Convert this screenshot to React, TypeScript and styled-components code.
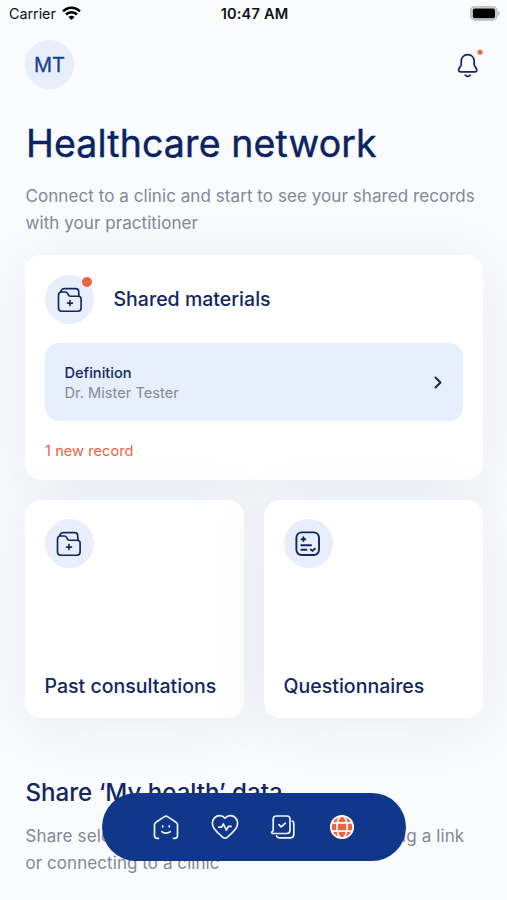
import React from "react";
import styled, { createGlobalStyle } from "styled-components";

const navy = "#122761";
const grey = "#83879a";
const orange = "#ed6442";

const GlobalStyle = createGlobalStyle`
  * { box-sizing: border-box; }
  body { margin: 0; background: #fafbfd; overflow: hidden; }
  h1, h2, h3, p { margin: 0; font-weight: 400; }
  button { border: 0; padding: 0; margin: 0; background: none; font: inherit; color: inherit; text-align: left; }
`;

const Screen = styled.main`
  position: relative;
  width: 507px;
  height: 900px;
  overflow: hidden;
  background: #fafbfd;
  color: ${navy};
  font-family: Inter, "Liberation Sans", sans-serif;
`;

const StatusBar = styled.div`
  display: grid;
  grid-template-columns: 1fr auto 1fr;
  align-items: center;
  height: 27px;
  padding: 0 7px 0 9px;
  font-size: 14.4px;
  color: #111;
`;

const Carrier = styled.div`
  display: flex;
  align-items: center;
  gap: 6px;
  letter-spacing: -0.05px;
`;

const Clock = styled.div`
  font-weight: 600;
  font-size: 14.6px;
  letter-spacing: 0.15px;
`;

const BatteryIcon = styled.svg`
  justify-self: end;
`;

const Header = styled.header`
  display: flex;
  align-items: center;
  justify-content: space-between;
  height: 49px;
  margin: 13px 24px 0 25px;
`;

const Avatar = styled.div`
  display: grid;
  place-items: center;
  width: 49px;
  height: 49px;
  border-radius: 50%;
  background: #e8eefc;
  color: #17408f;
  font-size: 20px;
  font-weight: 400;
  -webkit-text-stroke: 0.3px #17408f;
`;

const Content = styled.div`
  display: flex;
  flex-direction: column;
  padding: 0 24px 0 25px;
`;

const Title = styled.h1`
  margin: 32px 0 0 1px;
  font-size: 37.5px;
  line-height: 46px;
  letter-spacing: 0.12px;
  color: #0b2362;
  -webkit-text-stroke: 0.4px #0b2362;
  white-space: nowrap;
`;

const Lead = styled.p`
  margin: 16px 0 0 0.5px;
  color: ${grey};
  font-size: 17px;
  line-height: 27px;
  letter-spacing: 0.065px;
  white-space: nowrap;
`;

const Card = styled.section`
  display: flex;
  flex-direction: column;
  border-radius: 16px;
  background: #fff;
  box-shadow: 0 8px 64px rgba(35, 45, 105, 0.07);
`;

const SharedCard = styled(Card)`
  height: 225px;
  margin-top: 18px;
  padding: 20px 20px 0;
`;

const CardHeader = styled.div`
  display: flex;
  align-items: center;
  gap: 19.5px;
`;

const CardTitle = styled.h2`
  position: relative;
  top: -1px;
  font-size: 19.5px;
  line-height: 26px;
  font-weight: 500;
  letter-spacing: 0.02px;
  white-space: nowrap;
`;

const IconDisc = styled.div`
  position: relative;
  display: grid;
  place-items: center;
  flex: none;
  width: 49px;
  height: 49px;
  border-radius: 50%;
  background: #e8eefc;
`;

const Dot = styled.span`
  position: absolute;
  top: 2px;
  right: 2.5px;
  width: 10px;
  height: 10px;
  border-radius: 50%;
  background: ${orange};
`;

const RecordRow = styled.button`
  display: flex;
  align-items: center;
  justify-content: space-between;
  width: 100%;
  height: 78px;
  margin-top: 19px;
  padding: 1px 18px 0 19.5px;
  border-radius: 14px;
  background: #e7eefc;
`;

const RecordName = styled.div`
  font-size: 14.6px;
  line-height: 20px;
  font-weight: 500;
`;

const RecordOwner = styled.div`
  color: ${grey};
  font-size: 14.6px;
  line-height: 20px;
  letter-spacing: 0.03px;
`;

const NewRecord = styled.p`
  margin-top: 19px;
  color: ${orange};
  font-size: 14.6px;
  line-height: 22px;
  letter-spacing: 0.05px;
`;

const Tiles = styled.div`
  display: grid;
  grid-template-columns: 1fr 1fr;
  gap: 20px;
  margin-top: 20px;
`;

const Tile = styled(Card)`
  height: 218px;
  justify-content: space-between;
  padding: 19px 19.5px 18px;
`;

const ShareHeading = styled.h2`
  margin: 58px 0 0 0.5px;
  font-size: 24.1px;
  line-height: 34px;
  font-weight: 500;
  white-space: nowrap;
`;

const ShareText = styled(Lead)`
  margin-top: 13px;
  &::first-line { letter-spacing: 0.12px; }
`;

const NavBar = styled.nav`
  position: absolute;
  left: 102px;
  bottom: 39px;
  display: flex;
  align-items: center;
  justify-content: center;
  gap: 30.5px;
  width: 304px;
  height: 68px;
  border-radius: 34px;
  background: #103789;
`;

const NavItem = styled.button`
  display: grid;
  place-items: center;
  width: 28px;
  height: 28px;
`;

const LineIcon = styled.svg<{ $color?: string; $weight?: number }>`
  display: block;
  overflow: visible;
  fill: none;
  stroke: ${({ $color = navy }) => $color};
  stroke-width: ${({ $weight = 1.6 }) => $weight};
  stroke-linecap: round;
  stroke-linejoin: round;
`;

const WifiIcon = () => (
  <svg width="19" height="15" viewBox="0 0 19 15" fill="none" stroke="#000" strokeWidth="2.5">
    <path d="M1.1 5.3C5.8.6 13.2.6 17.9 5.3M4 8.5c3.1-3.1 7.9-3.1 11 0" />
    <path d="M6.4 10.9c1.8-1.7 4.4-1.7 6.2 0L9.5 13.9Z" fill="#000" stroke="none" />
  </svg>
);

const Battery = () => (
  <BatteryIcon width="30" height="15" viewBox="0 0 30 15">
    <rect x="0.8" y="0.8" width="26.2" height="13.2" rx="4" fill="#e2e2e3" stroke="#b4b4b6" strokeWidth="1.3" />
    <rect x="2.8" y="2.6" width="22.3" height="9.6" rx="1.8" fill="#000" />
    <path d="M28.2 5.2c2 .8 2 3.6 0 4.4Z" fill="#aaaaac" />
  </BatteryIcon>
);

const Bell = () => (
  <LineIcon width="30" height="32" viewBox="0 0 30 32" $weight={1.7}>
    <path d="M8.2 12.7C8.2 8.3 10.9 5.6 14.7 5.6s6.5 2.7 6.5 7.1v3.1c0 1.8 2.6 3 2.6 5.1 0 1.2-.6 1.9-1.8 1.9H7.4c-1.2 0-1.8-.7-1.8-1.9 0-2.1 2.6-3.3 2.6-5.1ZM12.2 26.1c1.3 1.7 3.7 1.7 5 0" />
    <circle cx="27" cy="3.2" r="2.5" fill={orange} stroke="none" />
  </LineIcon>
);

const Folder = () => (
  <LineIcon width="26" height="26" viewBox="0 0 26 26" $weight={1.65}>
    <path d="M1.5 8.2c0-2.1 1.1-3.2 3.2-3.2h3.6c1.2 0 1.9.5 2.4 1.5l.7 1.3c.5 1 1 1.4 2.2 1.4h7.6c1.9 0 2.9 1 2.9 2.9v8.9c0 2.1-1.1 3.2-3.2 3.2H4.7c-2.1 0-3.2-1.1-3.2-3.2ZM3.5 5.1l.5-1.3c.6-1.5 1.5-2.2 3-2.2h11.7c1.9 0 2.9 1 3 2.9l.3 4.8M13 13.6v5M10.5 16.1h5" />
  </LineIcon>
);

const Questionnaire = () => (
  <LineIcon width="26" height="26" viewBox="0 0 26 26" $weight={1.9}>
    <rect x="1.4" y="1.4" width="22.6" height="22.6" rx="5.2" />
    <path d="M8.4 6.3v3.8M6.5 8.2h3.8M6.3 14.2H16M6.3 18.7h5.1M15.8 18.5l1.7 1.3 2.4-2.1" />
  </LineIcon>
);

const Chevron = () => (
  <LineIcon width="14" height="16" viewBox="0 0 14 16" $weight={2}>
    <path d="m4.5 2.5 5 5-5 5" />
  </LineIcon>
);

const iconWhite = "#edf5ff";

const Home = () => (
  <LineIcon width="28" height="28" viewBox="0 0 28 28" $color={iconWhite} $weight={1.7}>
    <path d="M6.5 25.3H5.3c-1.8 0-2.8-1-2.8-2.8V11.7c0-1.1.5-1.9 1.5-2.5l8.4-5.6c1-.7 2.1-.7 3.1 0L24 9.2c1 .6 1.5 1.4 1.5 2.5v10.8c0 1.8-1 2.8-2.8 2.8h-1.2M10.7 12.8v1M17.3 12.8v1M9.7 18.6c2.3 2.1 6.3 2.1 8.6 0" />
  </LineIcon>
);

const HeartPulse = () => (
  <LineIcon width="28" height="28" viewBox="0 0 28 28" $color={iconWhite} $weight={1.7}>
    <path d="M14 5.2C11.1 1.7 6.3 1.9 3.5 4.8.7 7.8.9 12.5 3.1 15.5c2 2.8 5.4 6.1 8.7 8.8 1.5 1.2 2.9 1.2 4.4 0 3.3-2.7 6.7-6 8.7-8.8 2.2-3 2.4-7.7-.4-10.7-2.8-2.9-7.6-3.1-10.5.4Z" />
    <path d="M7.8 14.2h2.8l1.8-3.2 3 6.2 2-3.8h2.8" />
  </LineIcon>
);

const Tasks = () => (
  <LineIcon width="28" height="28" viewBox="0 0 28 28" $color={iconWhite} $weight={1.7}>
    <path d="M4.2 17.2V6.1c0-2.1 1-3.1 3.1-3.1h10.5C20 3 21 4 21 6.1v11.2c0 2.1-1 3.2-3.1 3.2H3.6c-1.4 0-1.1-1.2-.4-1.8.7-.5 1-.9 1-1.5ZM10 11.7l2.2 2.1 4.1-3.7M23.3 8.1c1 .2 1.5 1.1 1.5 2.4v11.1c0 2.1-1.1 3.2-3.2 3.2H10.2c-1.6 0-2.5-.8-2.6-2" />
  </LineIcon>
);

const Globe = () => (
  <LineIcon width="28" height="28" viewBox="0 0 28 28" $color="#fff" $weight={1.7}>
    <circle cx="14" cy="14" r="11.2" fill={orange} />
    <ellipse cx="14" cy="14" rx="5.1" ry="11.2" />
    <path d="M4.3 9.8h19.4M4.3 18.2h19.4" />
  </LineIcon>
);

export default function App() {
  return (
    <>
      <GlobalStyle />
      <Screen>
        <StatusBar>
          <Carrier>Carrier <WifiIcon /></Carrier>
          <Clock>10:47 AM</Clock>
          <Battery />
        </StatusBar>
        <Header>
          <Avatar>MT</Avatar>
          <button aria-label="Notifications"><Bell /></button>
        </Header>
        <Content>
          <Title>Healthcare network</Title>
          <Lead>Connect to a clinic and start to see your shared records<br />with your practitioner</Lead>
          <SharedCard>
            <CardHeader>
              <IconDisc><Folder /><Dot /></IconDisc>
              <CardTitle>Shared materials</CardTitle>
            </CardHeader>
            <RecordRow>
              <div>
                <RecordName>Definition</RecordName>
                <RecordOwner>Dr. Mister Tester</RecordOwner>
              </div>
              <Chevron />
            </RecordRow>
            <NewRecord>1 new record</NewRecord>
          </SharedCard>
          <Tiles>
            <Tile>
              <IconDisc><Folder /></IconDisc>
              <CardTitle>Past consultations</CardTitle>
            </Tile>
            <Tile>
              <IconDisc><Questionnaire /></IconDisc>
              <CardTitle>Questionnaires</CardTitle>
            </Tile>
          </Tiles>
          <ShareHeading>Share ‘My health’ data</ShareHeading>
          <ShareText>Share selected health information by generating a link<br />or connecting to a clinic</ShareText>
        </Content>
        <NavBar>
          <NavItem aria-label="Home"><Home /></NavItem>
          <NavItem aria-label="My health"><HeartPulse /></NavItem>
          <NavItem aria-label="Tasks"><Tasks /></NavItem>
          <NavItem aria-label="Healthcare network"><Globe /></NavItem>
        </NavBar>
      </Screen>
    </>
  );
}
